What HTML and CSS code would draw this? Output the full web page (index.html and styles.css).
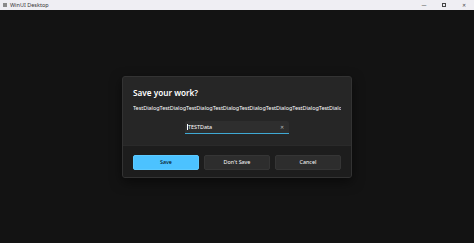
FILE: index.html
```html
<!DOCTYPE html>
<html lang="en">
<head>
    <meta charset="UTF-8">
    <meta name="viewport" content="width=device-width, initial-scale=1.0">
    <title>WinUI Desktop</title>
    <link rel="stylesheet" href="styles.css">
</head>
<body>
    <header class="titlebar">
        <span class="app-icon"></span>
        <span class="app-title">WinUI Desktop</span>
        <div class="caption-buttons">
            <span class="cap-btn">&#8212;</span>
            <span class="cap-btn"><span class="max-box"></span></span>
            <span class="cap-btn">&#10005;</span>
        </div>
    </header>
    <main class="stage">
        <section class="dialog">
            <div class="dialog-content">
                <h1 class="dialog-title">Save your work?</h1>
                <p class="dialog-body">TestDialogTestDialogTestDialogTestDialogTestDialogTestDialogTestDialogTestDialogTestDialog</p>
                <div class="textbox">
                    <span class="caret"></span>
                    <span class="textbox-value">TESTData</span>
                    <span class="textbox-clear">&#10005;</span>
                </div>
            </div>
            <footer class="dialog-footer">
                <button class="btn btn-primary">Save</button>
                <button class="btn">Don't Save</button>
                <button class="btn">Cancel</button>
            </footer>
        </section>
    </main>
</body>
</html>
```

FILE: styles.css
```css
* {
    box-sizing: border-box;
}
body {
    margin: 0;
    padding: 0;
    height: 243px;
    display: flex;
    flex-direction: column;
    background-color: #131313;
    font-family: "Noto Sans", "Open Sans", sans-serif;
    color: #ffffff;
    overflow: hidden;
}
.titlebar {
    height: 10px;
    display: flex;
    align-items: center;
    background-color: #efeef3;
    color: #333;
    font-size: 5.5px;
}
.app-icon {
    width: 4px;
    height: 4px;
    margin-left: 3px;
    margin-right: 3px;
    background-color: #8a8a8a;
}
.app-title {
    white-space: nowrap;
}
.caption-buttons {
    margin-left: auto;
    display: flex;
    height: 100%;
}
.cap-btn {
    width: 20px;
    display: flex;
    align-items: center;
    justify-content: center;
    font-size: 5px;
    color: #444;
}
.max-box {
    width: 4px;
    height: 4px;
    border: 0.8px solid #444;
}
.stage {
    flex: 1;
    display: flex;
    align-items: center;
    justify-content: center;
}
.dialog {
    width: 230px;
    height: 102px;
    background-color: #262626;
    border: 1px solid #333;
    border-radius: 3px;
    overflow: hidden;
    display: flex;
    flex-direction: column;
    box-shadow: 0 4px 12px rgba(0, 0, 0, 0.5);
}
.dialog-content {
    height: 68px;
    padding: 10px 10px 0 10px;
    display: flex;
    flex-direction: column;
}
.dialog-title {
    margin: 0;
    font-size: 8.2px;
    line-height: 11px;
    font-weight: 600;
}
.dialog-body {
    margin: 6px 0 0 0;
    font-size: 5.5px;
    line-height: 8px;
    white-space: nowrap;
    overflow: hidden;
    letter-spacing: -0.05px;
}
.textbox {
    margin: 9px auto 0 auto;
    width: 104px;
    height: 13px;
    background-color: #2e2e2e;
    border-radius: 2px 2px 0 0;
    border-bottom: 1px solid #3fa9d4;
    display: flex;
    align-items: center;
    padding: 0 5px 0 2px;
    font-size: 5.4px;
}
.caret {
    width: 0.6px;
    height: 6px;
    background-color: #fff;
    margin-right: 0.5px;
}
.textbox-clear {
    margin-left: auto;
    font-size: 4.5px;
    color: #bbb;
}
.dialog-footer {
    flex: 1;
    background-color: #1d1d1d;
    border-top: 1px solid #2a2a2a;
    padding: 9px 10px 0 10px;
    display: grid;
    grid-template-columns: repeat(3, 1fr);
    gap: 5px;
    align-items: start;
}
.btn {
    height: 15px;
    border: 1px solid #353535;
    border-radius: 2px;
    background-color: #2d2d2d;
    color: #fff;
    font-family: "Noto Sans", "Open Sans", sans-serif;
    font-size: 5.4px;
    padding: 0;
}
.btn-primary {
    background-color: #4cc2ff;
    border-color: #5ccaff;
    color: #000;
}
```
